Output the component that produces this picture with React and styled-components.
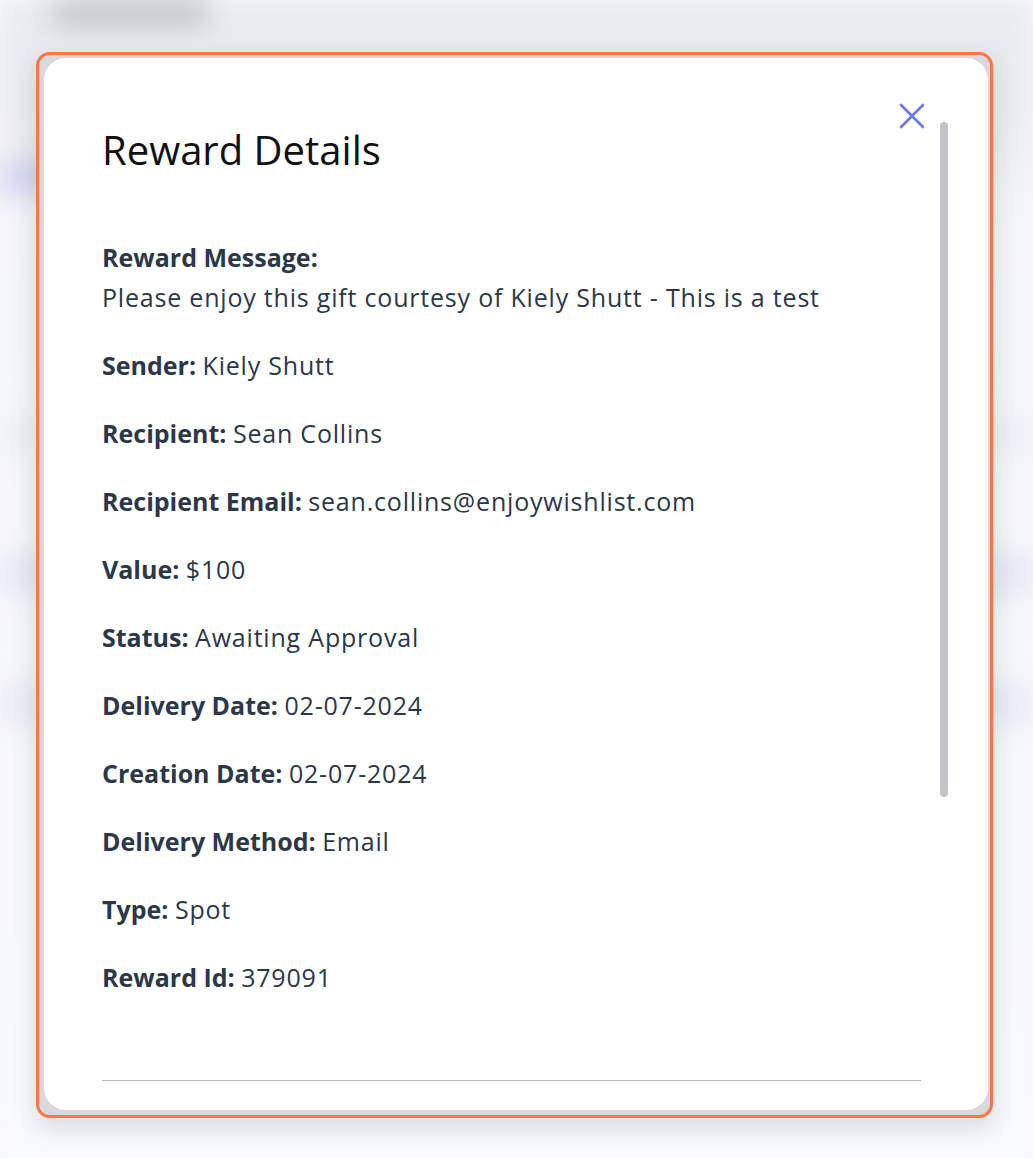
import React from 'react'
import styled, { createGlobalStyle } from 'styled-components'

const GlobalStyle = createGlobalStyle`
  html, body {
    margin: 0;
    padding: 0;
    background: #f8f9fb;
  }
  body {
    font-family: 'Open Sans', 'Noto Sans', sans-serif;
  }
`

const fields = [
  { label: 'Sender:', value: 'Kiely Shutt' },
  { label: 'Recipient:', value: 'Sean Collins' },
  { label: 'Recipient Email:', value: 'sean.collins@enjoywishlist.com' },
  { label: 'Value:', value: '$100' },
  { label: 'Status:', value: 'Awaiting Approval' },
  { label: 'Delivery Date:', value: '02-07-2024' },
  { label: 'Creation Date:', value: '02-07-2024' },
  { label: 'Delivery Method:', value: 'Email' },
  { label: 'Type:', value: 'Spot' },
  { label: 'Reward Id:', value: '379091' },
]

export default function App() {
  return (
    <>
      <GlobalStyle />
      <Page>
        <Backdrop aria-hidden>
          <HeaderBlur>
            <LogoBlur />
          </HeaderBlur>
          <TabBlur />
          <RowBlur $top={220} />
          <RowBlur $top={100} $tint="#e4e6f3" />
          <RowBlur $top={90} $tint="#e8e9f4" />
        </Backdrop>

        <Overlay>
          <Frame>
            <Card>
              <CloseButton aria-label="Close">
                <svg width="26" height="26" viewBox="0 0 26 26">
                  <path
                    d="M2 2 L24 24 M24 2 L2 24"
                    stroke="#6b77e6"
                    strokeWidth="2.6"
                    strokeLinecap="round"
                    fill="none"
                  />
                </svg>
              </CloseButton>
              <ScrollThumb />

              <Title>Reward Details</Title>

              <Field>
                <Label>Reward Message:</Label>
                <br />
                <Value>Please enjoy this gift courtesy of Kiely Shutt - This is a test</Value>
              </Field>
              {fields.map((f) => (
                <Field key={f.label}>
                  <Label>{f.label}</Label> <Value>{f.value}</Value>
                </Field>
              ))}

              <Divider />
            </Card>
          </Frame>
        </Overlay>
      </Page>
    </>
  )
}

const Page = styled.div`
  display: grid;
  min-height: 1158px;
  overflow: hidden;
  > * {
    grid-area: 1 / 1;
  }
`

const Backdrop = styled.div`
  display: flex;
  flex-direction: column;
  filter: blur(14px);
  background: linear-gradient(#e9eaec 0, #e9eaec 110px, #f3f4f6 220px, #f8f9fb 100%);
`

const HeaderBlur = styled.div`
  height: 60px;
  padding: 0 0 0 50px;
  display: flex;
  align-items: flex-start;
`

const LogoBlur = styled.div`
  width: 160px;
  height: 24px;
  background: #b9bcc1;
  border-radius: 12px;
`

const TabBlur = styled.div`
  margin-top: 100px;
  width: 60px;
  height: 34px;
  background: #cfd1ef;
`

const RowBlur = styled.div`
  margin-top: ${(p) => p.$top}px;
  height: 40px;
  background: ${(p) => p.$tint || '#eceef2'};
`

const Overlay = styled.div`
  padding: 52px 0 0 36px;
  z-index: 1;
`

const Frame = styled.div`
  width: 944px;
  border: 3px solid #ff7544;
  border-radius: 14px;
  padding: 3px 2px 5px 5px;
  background: #d8d9dc;
  box-shadow: 0 10px 24px rgba(40, 44, 60, 0.14);
`

const Card = styled.div`
  position: relative;
  background: #ffffff;
  border-radius: 22px;
  height: 1052px;
  box-sizing: border-box;
  padding: 68px 67px 0 58px;
  color: #2d3748;
`

const CloseButton = styled.button`
  position: absolute;
  top: 45px;
  right: 63px;
  border: 0;
  padding: 0;
  background: none;
  display: flex;
  cursor: pointer;
`

const ScrollThumb = styled.div`
  position: absolute;
  top: 64px;
  right: 40px;
  width: 8px;
  height: 675px;
  border-radius: 4px;
  background: #c1c3c7;
`

const Title = styled.h2`
  margin: 0 0 63px;
  font-size: 40px;
  line-height: 48px;
  font-weight: 400;
  color: #111111;
`

const Field = styled.p`
  margin: 0 0 28px;
  font-size: 25px;
  line-height: 40px;
  color: #2d3748;
`

const Label = styled.strong`
  font-weight: 700;
`

const Value = styled.span`
  letter-spacing: 0.8px;
`

const Divider = styled.hr`
  margin: 83px 0 0;
  border: 0;
  height: 1px;
  background: #b8b8b8;
`
